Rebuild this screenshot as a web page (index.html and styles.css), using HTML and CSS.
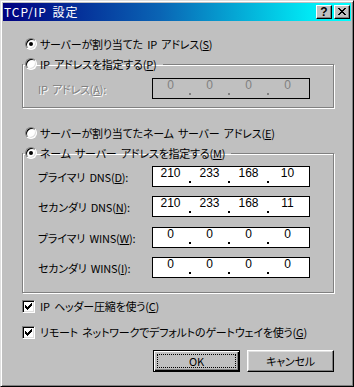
FILE: index.html
```html
<!DOCTYPE html>
<html lang="ja">
<head>
    <meta charset="UTF-8">
    <title>TCP/IP 設定</title>
    <link rel="stylesheet" href="styles.css">
</head>
<body>
    <div class="window">
        <div class="titlebar">
            <span class="title">TCP/IP 設定</span>
            <div class="title-btns">
                <span class="tbtn help">?</span>
                <span class="tbtn close">
                    <svg width="8" height="7" viewBox="0 0 8 7"><path d="M0 0h2v1h1v1h2v-1h1v-1h2v1h-1v1h-1v1h-1v1h1v1h1v1h1v1h-2v-1h-1v-1h-2v1h-1v1h-2v-1h1v-1h1v-1h1v-1h-1v-1h-1v-1h-1z"/></svg>
                </span>
            </div>
        </div>

        <div class="content">
            <div class="opt row-auto-ip">
                <span class="radio on"></span>
                <span>サーバーが割り当てた IP アドレス(<u>S</u>)</span>
            </div>

            <fieldset class="group group-ip">
                <legend class="opt"><span class="radio"></span><span>IP アドレスを指定する(<u>P</u>)</span></legend>
                <div class="field-row disabled first">
                    <span class="flabel">IP アドレス(<u>A</u>):</span>
                    <div class="ip">
                        <span class="seg">0</span><span class="sep"><i></i></span>
                        <span class="seg">0</span><span class="sep"><i></i></span>
                        <span class="seg">0</span><span class="sep"><i></i></span>
                        <span class="seg">0</span>
                    </div>
                </div>
            </fieldset>

            <div class="opt row-auto-dns">
                <span class="radio"></span>
                <span>サーバーが割り当てたネーム サーバー アドレス(<u>E</u>)</span>
            </div>

            <fieldset class="group group-dns">
                <legend class="opt"><span class="radio on"></span><span>ネーム サーバー アドレスを指定する(<u>M</u>)</span></legend>
                <div class="field-row first">
                    <span class="flabel">プライマリ DNS(<u>D</u>):</span>
                    <div class="ip">
                        <span class="seg">210</span><span class="sep"><i></i></span>
                        <span class="seg">233</span><span class="sep"><i></i></span>
                        <span class="seg">168</span><span class="sep"><i></i></span>
                        <span class="seg">10</span>
                    </div>
                </div>
                <div class="field-row gap9">
                    <span class="flabel">セカンダリ DNS(<u>N</u>):</span>
                    <div class="ip">
                        <span class="seg">210</span><span class="sep"><i></i></span>
                        <span class="seg">233</span><span class="sep"><i></i></span>
                        <span class="seg">168</span><span class="sep"><i></i></span>
                        <span class="seg">11</span>
                    </div>
                </div>
                <div class="field-row gap10">
                    <span class="flabel">プライマリ WINS(<u>W</u>):</span>
                    <div class="ip">
                        <span class="seg">0</span><span class="sep"><i></i></span>
                        <span class="seg">0</span><span class="sep"><i></i></span>
                        <span class="seg">0</span><span class="sep"><i></i></span>
                        <span class="seg">0</span>
                    </div>
                </div>
                <div class="field-row gap9">
                    <span class="flabel">セカンダリ WINS(<u>I</u>):</span>
                    <div class="ip">
                        <span class="seg">0</span><span class="sep"><i></i></span>
                        <span class="seg">0</span><span class="sep"><i></i></span>
                        <span class="seg">0</span><span class="sep"><i></i></span>
                        <span class="seg">0</span>
                    </div>
                </div>
            </fieldset>

            <div class="check-row first-check">
                <span class="checkbox"><svg width="7" height="7" viewBox="0 0 7 7"><path d="M0 2h1v1h1v1h1v-1h1v-1h1v-1h1v-1h1v3h-1v1h-1v1h-1v1h-1v1h-1v-1h-1v-1h-1z"/></svg></span>
                <span>IP ヘッダー圧縮を使う(<u>C</u>)</span>
            </div>
            <div class="check-row">
                <span class="checkbox"><svg width="7" height="7" viewBox="0 0 7 7"><path d="M0 2h1v1h1v1h1v-1h1v-1h1v-1h1v-1h1v3h-1v1h-1v1h-1v1h-1v1h-1v-1h-1v-1h-1z"/></svg></span>
                <span>リモート ネットワークでデフォルトのゲートウェイを使う(<u>G</u>)</span>
            </div>

            <div class="buttons">
                <button class="btn default"><span class="focus">OK</span></button>
                <button class="btn">キャンセル</button>
            </div>
        </div>
    </div>
</body>
</html>
```

FILE: styles.css
```css
/* ダイアログ全体 */
body {
    margin: 0;
    background: #c0c0c0;
}
.window {
    width: 354px;
    height: 387px;
    box-sizing: border-box;
    background: #c0c0c0;
    border: 1px solid;
    border-color: #dfdfdf #000 #000 #dfdfdf;
    box-shadow: inset 1px 1px #fff, inset -1px -1px #808080;
    padding: 2px;
    font-family: "Noto Sans CJK JP", "DejaVu Sans", sans-serif;
    font-size: 11px;
    font-feature-settings: "palt";
    letter-spacing: -0.2px;
    word-spacing: 2px;
    color: #000;
}

/* タイトルバー */
.titlebar {
    height: 18px;
    display: flex;
    align-items: center;
    justify-content: space-between;
    padding: 0 1px;
    background: linear-gradient(90deg, #000080 0%, #0a64b4 45%, #00e8f4 88%, #00ffff 100%);
    color: #fff;
}
.title {
    font-size: 12px;
    line-height: 16px;
    letter-spacing: 1px;
    font-feature-settings: normal;
}
.title-btns {
    display: flex;
    gap: 2px;
}
.tbtn {
    width: 16px;
    height: 14px;
    box-sizing: border-box;
    display: flex;
    align-items: center;
    justify-content: center;
    background: #c0c0c0;
    color: #000;
    border: 1px solid;
    border-color: #fff #000 #000 #fff;
    box-shadow: inset -1px -1px #808080;
}
.tbtn.help {
    font-family: "Liberation Sans", sans-serif;
    font-weight: bold;
    font-size: 12px;
    line-height: 12px;
    letter-spacing: 0;
}
.tbtn svg {
    display: block;
    margin-top: -1px;
}

/* 本体 */
.content {
    padding: 0 17px 0 19px;
}
.opt {
    display: flex;
    align-items: center;
    gap: 3px;
    height: 16px;
    line-height: 16px;
    white-space: nowrap;
}
.row-auto-ip {
    margin: 15px 0 0 3px;
}
.row-auto-dns {
    margin: 17px 0 0 3px;
}
u {
    text-decoration: underline;
    text-underline-offset: 1px;
}

/* ラジオボタン */
.radio {
    width: 12px;
    height: 12px;
    flex: none;
    box-sizing: border-box;
    border-radius: 50%;
    background: #fff;
    border: 1px solid;
    border-color: #808080 #fff #fff #808080;
    box-shadow: inset 1px 1px #000, inset -1px -1px #dfdfdf;
    position: relative;
}
.radio.on::after {
    content: "";
    position: absolute;
    left: 3px;
    top: 3px;
    width: 4px;
    height: 4px;
    border-radius: 50%;
    background: #000;
}

/* グループ枠 */
.group {
    margin: 0;
    padding: 0;
    min-inline-size: 0;
    border: 1px solid #808080;
    box-shadow: 1px 1px 0 #fff, inset 1px 1px 0 #fff;
}
.group legend {
    padding: 0 6px 0 2px;
    margin-left: 0;
}
.group-ip {
    margin-top: 4px;
    padding-bottom: 8px;
}
.group-dns {
    margin-top: 4px;
    padding-bottom: 14px;
}

.field-row {
    display: flex;
    align-items: center;
    padding-left: 15px;
}
.field-row.first {
    margin-top: 5px;
}
.group-ip .field-row.first {
    margin-top: 6px;
}
.field-row.gap9 {
    margin-top: 9px;
}
.field-row.gap10 {
    margin-top: 10px;
}
.flabel {
    width: 114px;
    flex: none;
    white-space: nowrap;
}
.disabled .flabel {
    color: #808080;
    text-shadow: 1px 1px #fff;
}

/* IP アドレス入力欄 */
.ip {
    width: 158px;
    height: 21px;
    box-sizing: border-box;
    border: 1px solid #000;
    background: #fff;
    display: flex;
    font-family: "Liberation Sans", sans-serif;
    font-size: 12px;
    letter-spacing: 0;
    word-spacing: 0;
}
.seg {
    width: 35px;
    text-align: center;
    line-height: 12px;
}
.sep {
    width: 4px;
    display: flex;
    justify-content: center;
    align-items: flex-end;
    padding-bottom: 3px;
}
.sep i {
    width: 2px;
    height: 2px;
    background: #000;
}
.disabled .ip {
    background: #c0c0c0;
    color: #808080;
}
.disabled .sep i {
    background: #808080;
}

/* チェックボックス */
.check-row {
    display: flex;
    align-items: center;
    gap: 5px;
    height: 16px;
    line-height: 16px;
    white-space: nowrap;
    margin-top: 10px;
}
.check-row.first-check {
    margin-top: 5px;
}
.checkbox {
    width: 13px;
    height: 13px;
    flex: none;
    box-sizing: border-box;
    background: #fff;
    border: 1px solid;
    border-color: #808080 #fff #fff #808080;
    box-shadow: inset 1px 1px #000, inset -1px -1px #dfdfdf;
    display: flex;
    align-items: center;
    justify-content: center;
}
.checkbox svg {
    display: block;
}

/* ボタン */
.buttons {
    display: flex;
    justify-content: flex-end;
    gap: 7px;
    margin-top: 10px;
}
.btn {
    width: 87px;
    height: 22px;
    box-sizing: border-box;
    margin: 0;
    padding: 0;
    background: #c0c0c0;
    font: inherit;
    letter-spacing: inherit;
    color: #000;
    border: 1px solid;
    border-color: #fff #000 #000 #fff;
    box-shadow: inset -1px -1px #808080, inset 1px 1px #dfdfdf;
    display: flex;
    align-items: center;
    justify-content: center;
}
.btn.default {
    border: 1px solid #000;
    box-shadow: inset 1px 1px #fff, inset -1px -1px #000, inset -2px -2px #808080;
    padding: 3px;
}
.focus {
    flex: 1;
    align-self: stretch;
    display: flex;
    align-items: center;
    justify-content: center;
    border: 1px dotted #000;
}
```
